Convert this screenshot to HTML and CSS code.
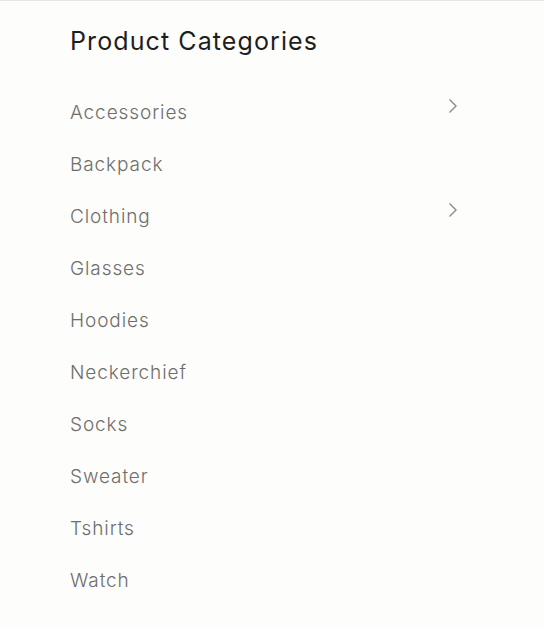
FILE: index.html
```html
<!DOCTYPE html>
<html>
<head>
<meta charset="utf-8">
<link rel="stylesheet" href="styles.css">
</head>
<body>
<div class="page">
  <section class="widget">
    <h2 class="title">Product Categories</h2>
    <ul class="cats">
      <li class="cat"><span>Accessories</span><svg class="chev" viewBox="0 0 10 16" width="10" height="16"><path d="M1.5 1.5 L8 8 L1.5 14.5" fill="none" stroke="#8a8a8a" stroke-width="1.4"/></svg></li>
      <li class="cat"><span>Backpack</span></li>
      <li class="cat"><span>Clothing</span><svg class="chev" viewBox="0 0 10 16" width="10" height="16"><path d="M1.5 1.5 L8 8 L1.5 14.5" fill="none" stroke="#8a8a8a" stroke-width="1.4"/></svg></li>
      <li class="cat"><span>Glasses</span></li>
      <li class="cat"><span>Hoodies</span></li>
      <li class="cat"><span>Neckerchief</span></li>
      <li class="cat"><span>Socks</span></li>
      <li class="cat"><span>Sweater</span></li>
      <li class="cat"><span>Tshirts</span></li>
      <li class="cat"><span>Watch</span></li>
    </ul>
  </section>
</div>
</body>
</html>
```

FILE: styles.css
```css
html, body {
  margin: 0;
  padding: 0;
  background: #fdfdfb;
}
.page {
  border-top: 1px solid #e6e6e6;
  min-height: 627px;
  font-family: "Inter", "Noto Sans", sans-serif;
}
.widget {
  padding: 24px 86px 0 70px;
}
.title {
  margin: 0 0 39px;
  font-size: 25px;
  font-weight: 400;
  color: #1e1e1e;
  line-height: 32px;
  letter-spacing: 1.1px;
}
.cats {
  list-style: none;
  margin: 0;
  padding: 0;
}
.cat {
  display: flex;
  justify-content: space-between;
  align-items: flex-start;
  height: 52px;
  font-size: 19px;
  font-weight: 300;
  line-height: 34px;
  letter-spacing: 0.9px;
  color: #6e6e6e;
}
.chev {
  margin-top: 2px;
}
```
